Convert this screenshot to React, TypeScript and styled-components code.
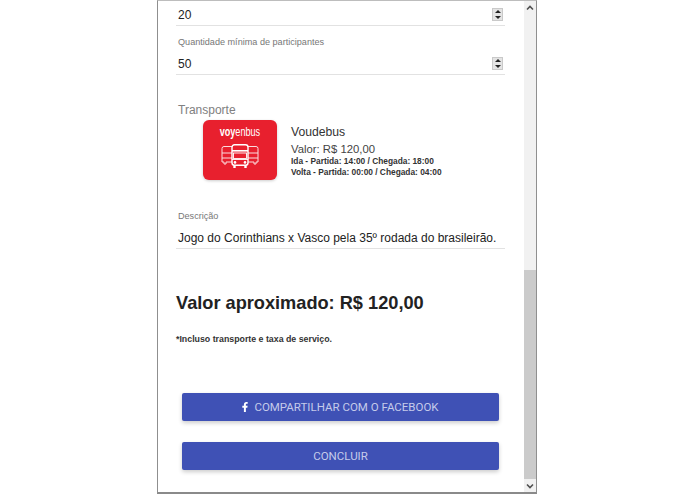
import styled, { createGlobalStyle } from "styled-components";
import { FaFacebookF } from "react-icons/fa";

const GlobalStyle = createGlobalStyle`
  html, body {
    margin: 0;
    padding: 0;
    background: #fff;
    overflow: hidden;
  }
  body {
    font-family: "Liberation Sans", Arial, sans-serif;
  }
`;

const Page = styled.div`
  width: 695px;
  height: 494px;
  padding-left: 157px;
  box-sizing: border-box;
`;

const Frame = styled.div`
  width: 380px;
  height: 494px;
  box-sizing: border-box;
  display: flex;
  border: 1px solid #8f8f8f;
  border-top-color: #bdbdbd;
  border-bottom: 2px solid #8a8a8a;
`;

const Content = styled.main`
  flex: 1;
  min-width: 0;
  padding: 0 19px 0 18px;
  display: flex;
  flex-direction: column;
`;

const Field = styled.div<{ $cropped?: boolean }>`
  height: ${(p) => (p.$cropped ? "25px" : "49px")};
  box-sizing: border-box;
  border-bottom: 1px solid #e2e2e2;
  display: flex;
  flex-direction: column;
  justify-content: flex-end;
`;

const FieldLabel = styled.label`
  font-size: 9.1px;
  line-height: 12px;
  color: #777;
  margin: 0 0 8px 2px;
`;

const FieldValue = styled.div`
  display: flex;
  align-items: center;
  justify-content: space-between;
  white-space: nowrap;
  font-size: 12px;
  line-height: 16px;
  color: #222;
  margin: 0 0 2px 2px;
`;

const Spinner = styled.span`
  width: 11px;
  height: 13px;
  margin: 0 2px 1px 0;
  background: #e4e4e4;
  border: 1px solid #c9c9c9;
  box-sizing: border-box;
  display: flex;
  flex-direction: column;
  align-items: center;
  justify-content: space-around;
`;

const SpinArrow = styled.i<{ $down?: boolean }>`
  display: block;
  width: 0;
  height: 0;
  border-left: 3px solid transparent;
  border-right: 3px solid transparent;
  ${(p) => (p.$down ? "border-top: 3px solid #222;" : "border-bottom: 3px solid #222;")}
`;

const SectionLabel = styled.div`
  font-size: 12px;
  line-height: 14px;
  color: #808080;
  margin: 28px 0 0 2px;
`;

const TransportRow = styled.div`
  display: flex;
  margin-top: 3px;
  padding-left: 27px;
  gap: 14px;
`;

const Logo = styled.div`
  width: 74px;
  height: 60px;
  background: #e8202e;
  border-radius: 6px;
  box-shadow: 0 1px 3px rgba(0, 0, 0, 0.2);
  display: flex;
  flex-direction: column;
  align-items: center;
  padding-top: 5px;
  box-sizing: border-box;
  color: #fff;
`;

const LogoName = styled.span`
  font-family: "Liberation Sans Narrow", "Liberation Sans", sans-serif;
  font-size: 13px;
  line-height: 14px;
  font-weight: 400;
  transform: scaleX(0.7);
  margin-bottom: 5px;
  white-space: nowrap;
`;

const LogoAccent = styled.b`
  font-weight: 700;
`;

const TransportInfo = styled.div`
  padding-top: 5px;
  color: #333;
`;

const TransportName = styled.div`
  font-size: 12.2px;
  line-height: 15px;
`;

const TransportPrice = styled.div`
  font-size: 11.3px;
  line-height: 14px;
  color: #444;
  margin-top: 2px;
`;

const TransportTime = styled.div`
  font-size: 8.35px;
  line-height: 11px;
  font-weight: 700;
  color: #333;
`;

const DescriptionField = styled(Field)`
  margin-top: 20px;
`;

const Total = styled.h2`
  margin: 42px 0 0;
  font-size: 18.2px;
  line-height: 24px;
  font-weight: 700;
  color: #222;
`;

const Note = styled.p`
  margin: 19px 0 0;
  font-size: 8.8px;
  line-height: 11px;
  font-weight: 700;
  color: #333;
`;

const Actions = styled.div`
  margin: 48px 6px 0 6px;
  display: flex;
  flex-direction: column;
  gap: 21px;
`;

const ActionButton = styled.button<{ $withIcon?: boolean }>`
  height: 28px;
  border: 0;
  border-radius: 2px;
  background: #3f51b5;
  color: #c5cbea;
  font-family: Roboto, "Liberation Sans", sans-serif;
  font-size: 11.5px;
  display: flex;
  align-items: center;
  justify-content: center;
  gap: 4px;
  box-shadow: 0 2px 4px rgba(0, 0, 0, 0.2);
  padding: 0 ${(p) => (p.$withIcon ? "2px" : "0")} 0 0;
`;

const Scrollbar = styled.div`
  width: 12px;
  background: #f1f1f1;
  display: flex;
  flex-direction: column;
`;

const ScrollButton = styled.div`
  height: 13px;
  display: flex;
  align-items: center;
  justify-content: center;
`;

const ScrollTrack = styled.div`
  flex: 1;
  display: flex;
  flex-direction: column;
  justify-content: flex-end;
`;

const ScrollThumb = styled.div`
  height: 209px;
  background: #cbcbcb;
`;

const Chevron = ({ down }: { down?: boolean }) => (
  <svg width="8" height="6" viewBox="0 0 8 6" fill="none">
    <path
      d={down ? "M1 1.5 L4 4.5 L7 1.5" : "M1 4.5 L4 1.5 L7 4.5"}
      stroke="#505050"
      strokeWidth="1.6"
    />
  </svg>
);

const BusIcon = () => (
  <svg width="38" height="24" viewBox="0 0 38 24" fill="none">
    <g stroke="#fff" strokeWidth="1" opacity="0.85">
      <path d="M11 2.5 H3 Q1 2.5 1 4.5 V18 H3 V20 H5 V18 H11" />
      <path d="M27 2.5 H35 Q37 2.5 37 4.5 V18 H35 V20 H33 V18 H27" />
      <path d="M1 9 H11 M27 9 H37 M1 14 H11 M27 14 H37" />
    </g>
    <rect x="11" y="0.7" width="16" height="20.6" rx="2.5" fill="#e8202e" stroke="#fff" strokeWidth="1.4" />
    <rect x="11" y="6" width="16" height="1.6" fill="#fff" />
    <rect x="12.5" y="9" width="13" height="5.5" fill="#e8202e" stroke="#fff" strokeWidth="0.9" />
    <path d="M11 15.5 H27" stroke="#fff" strokeWidth="0.9" />
    <circle cx="14" cy="18.4" r="1.3" fill="#fff" />
    <circle cx="24" cy="18.4" r="1.3" fill="#fff" />
    <path d="M13.5 21 V24 M24.5 21 V24" stroke="#fff" strokeWidth="2.4" />
  </svg>
);

const NumberValue = ({ value }: { value: string }) => (
  <FieldValue>
    {value}
    <Spinner>
      <SpinArrow />
      <SpinArrow $down />
    </Spinner>
  </FieldValue>
);

export default function App() {
  return (
    <Page>
      <GlobalStyle />
      <Frame>
        <Content>
          <Field $cropped>
            <NumberValue value="20" />
          </Field>
          <Field>
            <FieldLabel>Quantidade mínima de participantes</FieldLabel>
            <NumberValue value="50" />
          </Field>
          <SectionLabel>Transporte</SectionLabel>
          <TransportRow>
            <Logo>
              <LogoName>
                <LogoAccent>voy</LogoAccent>enbus
              </LogoName>
              <BusIcon />
            </Logo>
            <TransportInfo>
              <TransportName>Voudebus</TransportName>
              <TransportPrice>Valor: R$ 120,00</TransportPrice>
              <TransportTime>Ida - Partida: 14:00 / Chegada: 18:00</TransportTime>
              <TransportTime>Volta - Partida: 00:00 / Chegada: 04:00</TransportTime>
            </TransportInfo>
          </TransportRow>
          <DescriptionField>
            <FieldLabel>Descrição</FieldLabel>
            <FieldValue>Jogo do Corinthians x Vasco pela 35º rodada do brasileirão.</FieldValue>
          </DescriptionField>
          <Total>Valor aproximado: R$ 120,00</Total>
          <Note>*Incluso transporte e taxa de serviço.</Note>
          <Actions>
            <ActionButton $withIcon>
              <FaFacebookF size={10} color="#fff" />
              COMPARTILHAR COM O FACEBOOK
            </ActionButton>
            <ActionButton>CONCLUIR</ActionButton>
          </Actions>
        </Content>
        <Scrollbar>
          <ScrollButton>
            <Chevron />
          </ScrollButton>
          <ScrollTrack>
            <ScrollThumb />
          </ScrollTrack>
          <ScrollButton>
            <Chevron down />
          </ScrollButton>
        </Scrollbar>
      </Frame>
    </Page>
  );
}
